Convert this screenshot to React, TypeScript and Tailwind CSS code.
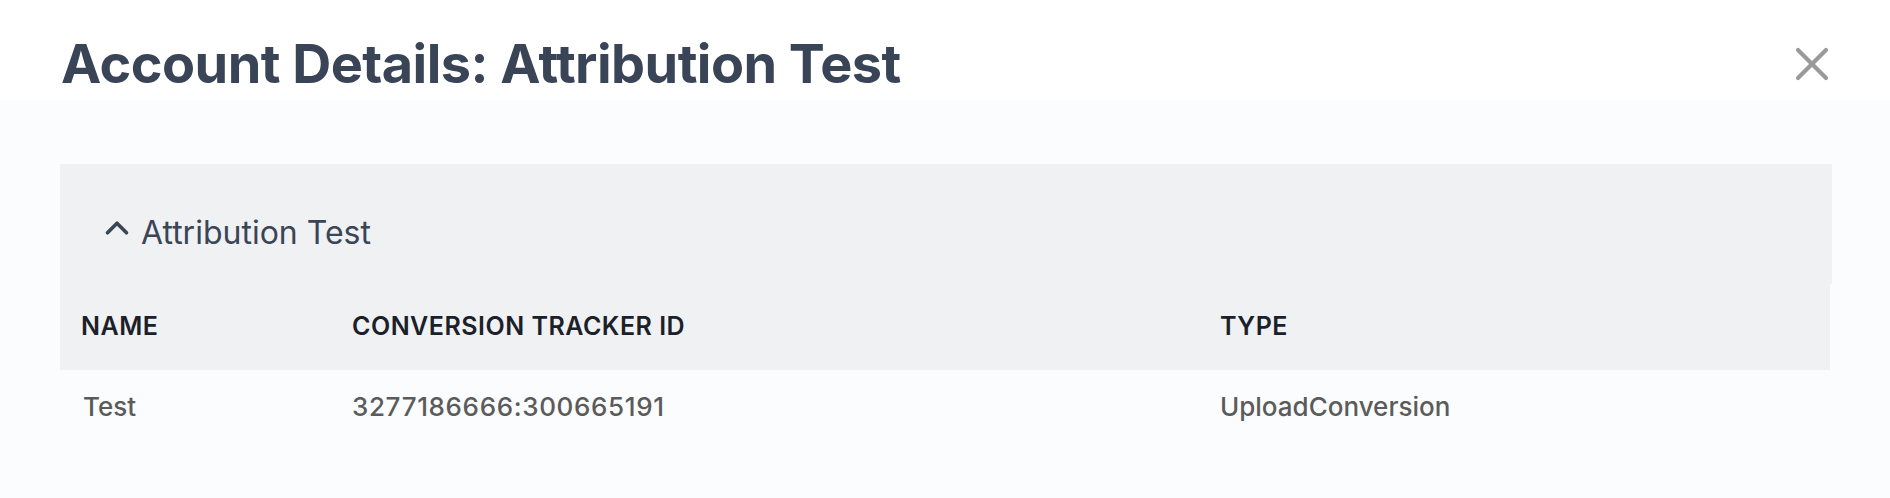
import { ChevronUp, X } from 'lucide-react'

const rows = [
  { name: 'Test', trackerId: '3277186666:300665191', type: 'UploadConversion' },
]

export default function App() {
  return (
    <div className="w-full h-[498px] bg-[#fbfcfd] font-['Inter','Liberation_Sans',sans-serif]">
      {/* Modal header */}
      <div className="h-[100px] bg-white flex items-start justify-between pl-[61px] pr-[50px]">
        <h1 className="mt-[37px] text-[54px] leading-none font-bold text-[#394456] tracking-[-0.01em]">
          Account Details: Attribution Test
        </h1>
        <button className="mt-[36px] text-[#9a9a9a]">
          <X size={56} strokeWidth={1.8} />
        </button>
      </div>

      {/* Body */}
      <div className="pl-[60px] pt-[64px]">
        <div className="w-[1772px]">
          <div className="h-[120px] bg-[#f0f1f3] flex items-center pl-[38px] pt-[14px] text-[#3a4556]">
            <ChevronUp size={38} strokeWidth={2.3} className="-mt-[6px]" />
            <span className="ml-[5px] mt-[3px] text-[32px] leading-none">Attribution Test</span>
          </div>

          <table className="w-[1770px] table-fixed border-collapse">
            <thead>
              <tr className="h-[86px] bg-[#f0f1f3] text-left text-[#1b2029]">
                <th className="w-[292px] pl-[21px] text-[25px] font-semibold tracking-[0.02em] uppercase">Name</th>
                <th className="w-[868px] text-[25px] font-semibold tracking-[0.02em] uppercase">Conversion Tracker ID</th>
                <th className="text-[25px] font-semibold tracking-[0.02em] uppercase">Type</th>
              </tr>
            </thead>
            <tbody>
              {rows.map(row => (
                <tr key={row.trackerId} className="h-[72px] text-[#5b5b5b] text-[26px] font-medium">
                  <td className="pl-[23px]">{row.name}</td>
                  <td className="tracking-[0.025em]">{row.trackerId}</td>
                  <td>{row.type}</td>
                </tr>
              ))}
            </tbody>
          </table>
        </div>
      </div>
    </div>
  )
}
